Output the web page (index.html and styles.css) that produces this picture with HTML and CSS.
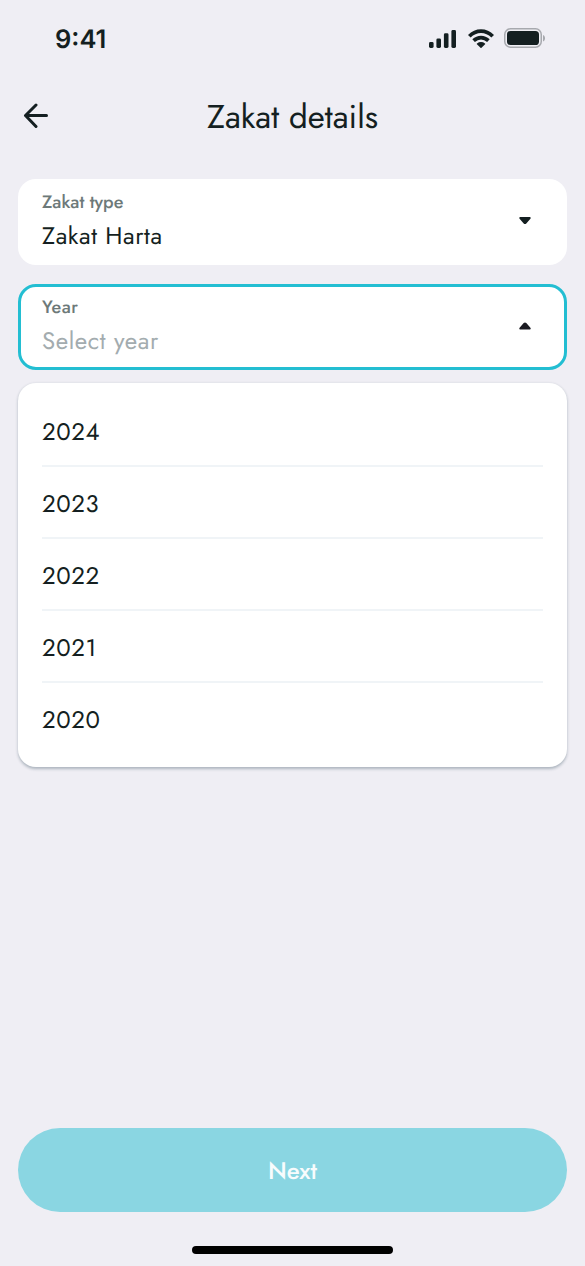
FILE: index.html
```html
<!DOCTYPE html>
<html lang="en">
<head>
<meta charset="utf-8">
<title>Zakat details</title>
<link rel="stylesheet" href="styles.css">
</head>
<body>
<div class="screen">
  <div class="status">
    <span class="clock">9:41</span>
    <div class="indicators">
      <svg class="signal" width="27" height="18" viewBox="0 0 27 18" fill="#141f21"><rect x="0" y="12" width="4.6" height="6" rx="1.4"/><rect x="7.4" y="8.4" width="4.6" height="9.6" rx="1.4"/><rect x="14.9" y="3.3" width="4.6" height="14.7" rx="1.4"/><rect x="22.4" y="0" width="4.6" height="18" rx="1.4"/></svg>
      <svg class="wifi" width="26" height="19" viewBox="0 0 26 19"><g fill="none" stroke="#141f21" stroke-width="3.7"><path d="M1.3 7.2C8 .3 18 .3 24.7 7.2"/><path d="M5.6 11.7C10 7.5 16 7.5 20.4 11.7"/></g><path fill="#141f21" d="M9 14.4c2.400-1.900 5.600-1.900 8 0 .4.3.4.6.1.9l-3.600 3.400c-.3.3-.7.3-1 0l-3.600-3.400c-.3-.3-.3-.6.1-.9z"/></svg>
      <svg width="41" height="20" viewBox="0 0 41 20"><rect x=".75" y=".75" width="36.5" height="18.5" rx="5.7" fill="none" stroke="#a7a9ae" stroke-width="1.5"/><rect x="3" y="3" width="32" height="14" rx="3.6" fill="#141f21"/><path fill="#a7a9ae" d="M39 7c2.700 1.100 2.700 5.300 0 6.400z"/></svg>
    </div>
  </div>
  <header class="header">
    <svg class="back" width="26" height="26" viewBox="0 0 26 26" fill="none" stroke="#141f21" stroke-width="3" stroke-linecap="round" stroke-linejoin="round"><path d="M23.500 12.500H2.500M13 2L2.500 12.500 13 23.500"/></svg>
    <h1 class="title">Zakat details</h1>
  </header>
  <main class="form">
    <div class="field">
      <div><div class="label">Zakat type</div><div class="value">Zakat Harta</div></div>
      <svg class="caret" width="12" height="8" viewBox="0 0 12 8"><path fill="#141f21" d="M1.500 0h9c1.300 0 1.600 1.300.7 2.100L7.300 6.500c-.8.8-1.800.8-2.600 0L.8 2.100C-.1 1.300.2 0 1.500 0z"/></svg>
    </div>
    <div class="field field-active">
      <div><div class="label label-year">Year</div><div class="value placeholder">Select year</div></div>
      <svg class="caret" width="12" height="8" viewBox="0 0 12 8"><path fill="#1b1b22" d="M1.500 7.500h9c1.300 0 1.600-1.300.7-2.100L7.300 1c-.8-.8-1.800-.8-2.600 0L.8 5.400c-.9.8-.6 2.100.7 2.100z"/></svg>
    </div>
    <ul class="menu">
      <li class="option">2024</li>
      <li class="option">2023</li>
      <li class="option">2022</li>
      <li class="option">2021</li>
      <li class="option">2020</li>
    </ul>
  </main>
  <button class="next">Next</button>
  <div class="home"></div>
</div>
</body>
</html>
```
FILE: styles.css
```css
* { box-sizing: border-box; }
body { margin: 0; background: #efeef4; color: #141f21; font-family: Jost, Lato, sans-serif; text-rendering: geometricPrecision; }
.screen { display: flex; flex-direction: column; width: 585px; height: 1266px; padding: 0 18px 12px; background: #efeef4; }
.status { display: flex; justify-content: space-between; height: 78px; padding: 0 22px 0 37px; }
.clock { padding-top: 24px; font: 600 25.5px/32px Inter, sans-serif; letter-spacing: 0; }
.indicators { display: flex; align-items: flex-start; padding-top: 28px; }
.signal { margin: 2px 12px 0 0; }
.wifi { margin: 1px 10px 0 0; }
.header { display: grid; grid-template-columns: 60px 1fr 60px; align-items: center; height: 76px; }
.back { margin-left: 5px; }
.title { margin: 4px 0 0; font-size: 33px; font-weight: 400; line-height: 44px; text-align: center; white-space: nowrap; }
.form { display: flex; flex-direction: column; flex: 1; padding-top: 24.5px; }
.field { display: flex; justify-content: space-between; align-items: center; height: 86.5px; margin-bottom: 18.5px; padding: 0 36px 0 24px; border-radius: 18px; background: #fff; }
.field-active { margin-bottom: 12.5px; padding: 0 33px 0 21px; border: 3px solid #23bed2; }
.caret { margin-bottom: 1px; }
.label { font-size: 18px; font-weight: 500; line-height: 26px; color: #6d7979; }
.label-year { letter-spacing: 0.5px; }
.value { margin-top: 4px; margin-bottom: 1px; font-size: 24px; line-height: 34px; letter-spacing: 0.6px; }
.placeholder { color: #a3acaf; }
.menu { margin: 0; padding: 12px 24px; height: 384px; list-style: none; border-radius: 18px; background: #fff; box-shadow: 0 1.5px 3px rgba(20, 50, 65, .3); }
.option { display: flex; align-items: center; height: 72px; padding-top: 4px; border-bottom: 2px solid #f0f4f7; font-size: 24px; letter-spacing: 0.6px; }
.option:last-child { border-bottom-color: transparent; }
.next { height: 84px; margin-bottom: 34px; border: 0; border-radius: 42px; background: #8ad6e2; color: #f8fcfd; font: 500 24px Jost, Lato, sans-serif; text-rendering: inherit; }
.home { align-self: center; width: 201px; height: 8px; border-radius: 4px; background: #000; }
```
